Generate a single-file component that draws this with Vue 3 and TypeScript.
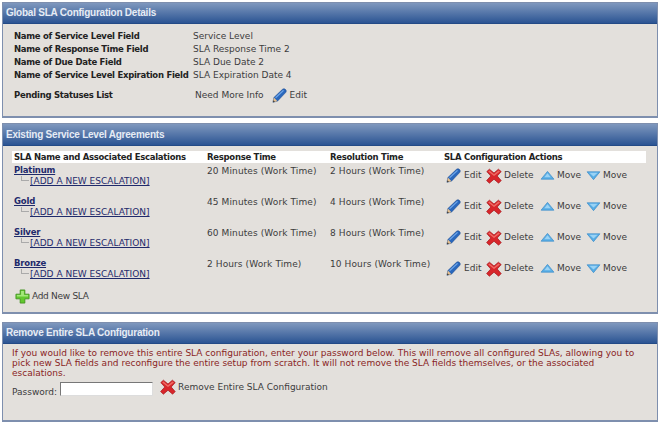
<script setup lang="ts">
const details: { label: string; value: string }[] = [
  { label: 'Name of Service Level Field', value: 'Service Level' },
  { label: 'Name of Response Time Field', value: 'SLA Response Time 2' },
  { label: 'Name of Due Date Field', value: 'SLA Due Date 2' },
  { label: 'Name of Service Level Expiration Field', value: 'SLA Expiration Date 4' },
]
const slas: { name: string; response: string; resolution: string }[] = [
  { name: 'Platinum', response: '20 Minutes (Work Time)', resolution: '2 Hours (Work Time)' },
  { name: 'Gold', response: '45 Minutes (Work Time)', resolution: '4 Hours (Work Time)' },
  { name: 'Silver', response: '60 Minutes (Work Time)', resolution: '8 Hours (Work Time)' },
  { name: 'Bronze', response: '2 Hours (Work Time)', resolution: '10 Hours (Work Time)' },
]
</script>

<template>
  <div class="page">
    <section class="panel first">
      <h2 class="head">Global SLA Configuration Details</h2>
      <div class="details">
        <div v-for="d in details" :key="d.label" class="detail">
          <b class="dlabel">{{ d.label }}</b><span>{{ d.value }}</span>
        </div>
        <div class="detail pending">
          <b class="dlabel">Pending Statuses List</b>
          <span class="pval">Need More Info</span>
          <span class="act editp">
            <svg class="ic" viewBox="0 0 16 16"><path d="M1 15.200 2 10.200 11.200 1.400c1.100-.9 2.400-.7 3.300.3s.9 2.200 0 3.200L5.800 14z" fill="#2a68bd" stroke="#1b4a8e" stroke-width=".6"/><path d="M3.400 9.800 11.800 2l1 .8-8.600 8z" fill="#6fa6e8"/><path d="M1 15.200 2 10.200l3.800 3.800z" fill="#e7c08e"/><path d="M1 15.200l.5-2.200 1.700 1.700z" fill="#333"/></svg>Edit
          </span>
        </div>
      </div>
    </section>

    <section class="panel second">
      <h2 class="head tall">Existing Service Level Agreements</h2>
      <div class="table">
        <div class="row hdr">
          <b>SLA Name and Associated Escalations</b>
          <b>Response Time</b>
          <b>Resolution Time</b>
          <b>SLA Configuration Actions</b>
        </div>
        <div v-for="s in slas" :key="s.name" class="row sla">
          <div class="namecell">
            <a class="name">{{ s.name }}</a>
            <div class="esc"><i class="elbow"></i><a class="add">[ADD A NEW ESCALATION]</a></div>
          </div>
          <div class="cell">{{ s.response }}</div>
          <div class="cell">{{ s.resolution }}</div>
          <div class="actions">
            <span class="act a1"><svg class="ic" viewBox="0 0 16 16"><path d="M1 15.200 2 10.200 11.200 1.400c1.100-.9 2.400-.7 3.300.3s.9 2.200 0 3.200L5.800 14z" fill="#2a68bd" stroke="#1b4a8e" stroke-width=".6"/><path d="M3.400 9.800 11.800 2l1 .8-8.600 8z" fill="#6fa6e8"/><path d="M1 15.200 2 10.200l3.800 3.800z" fill="#e7c08e"/><path d="M1 15.200l.5-2.200 1.700 1.700z" fill="#333"/></svg>Edit</span>
            <span class="act a2"><svg class="ic x" viewBox="0 0 16 16"><path d="M3.400 1.200 8 5 12.400 1.200 15.200 3.600 11.200 8l4 4.600-2.600 2.600L8 11.200l-4.600 4-2.800-2.600L4.800 8 .8 3.600z" fill="#d8262b" stroke="#a5171b" stroke-width=".7" stroke-linejoin="round"/><path d="M3.400 2.400 8 6.200 12.400 2.400 14 3.600 8 8 2.200 3.600z" fill="#ee6a64"/></svg>Delete</span>
            <span class="act a3"><svg class="ic tri" viewBox="0 0 16 12"><path d="M8 1.500 15 10H1z" fill="#58aee6" stroke="#3d8cc8" stroke-width=".8" stroke-linejoin="round"/><path d="M8 3.500 11.500 8h-7z" fill="#9bd3f5"/></svg>Move</span>
            <span class="act"><svg class="ic tri" viewBox="0 0 16 12"><path d="M8 10.500 15 2H1z" fill="#58aee6" stroke="#3d8cc8" stroke-width=".8" stroke-linejoin="round"/><path d="M3.500 3h9L8 7z" fill="#9bd3f5"/></svg>Move</span>
          </div>
        </div>
        <div class="addsla">
          <svg class="plus" viewBox="0 0 16 16"><path d="M5.500 1h5v4.500H15v5h-4.500V15h-5v-4.500H1v-5h4.500z" fill="#62c92f" stroke="#3f8f1d" stroke-width=".9" stroke-linejoin="round"/><path d="M6.500 2h3v4.500H14V8H2V6.500h4.500z" fill="#a3e87a"/></svg>
          Add New SLA
        </div>
      </div>
    </section>

    <section class="panel third">
      <h2 class="head">Remove Entire SLA Configuration</h2>
      <div class="remove">
        <p class="warn">If you would like to remove this entire SLA configuration, enter your password below. This will remove all configured SLAs, allowing you to pick new SLA fields and reconfigure the entire setup from scratch. It will not remove the SLA fields themselves, or the associated escalations.</p>
        <div class="pw">
          <label class="pwl" for="pw">Password:</label>
          <input id="pw" class="input" type="password" />
          <span class="act rm"><svg class="ic x" viewBox="0 0 16 16"><path d="M3.400 1.200 8 5 12.400 1.200 15.200 3.600 11.200 8l4 4.600-2.600 2.600L8 11.200l-4.600 4-2.800-2.600L4.800 8 .8 3.600z" fill="#d8262b" stroke="#a5171b" stroke-width=".7" stroke-linejoin="round"/><path d="M3.400 2.400 8 6.200 12.400 2.400 14 3.600 8 8 2.200 3.600z" fill="#ee6a64"/></svg>Remove Entire SLA Configuration</span>
        </div>
      </div>
    </section>
  </div>
</template>

<style scoped>
.page {
  width: 660px;
  height: 424px;
  box-sizing: border-box;
  padding: 2px 2px 0;
  background: #fff;
  font: 9px/13px "DejaVu Sans", Verdana, sans-serif;
  color: #3c3c3c;
  overflow: hidden;
  display: flex;
  flex-direction: column;
}
.panel {
  box-sizing: border-box;
  background: #e3e0dc;
  border: 1px solid #7e8fae;
  border-bottom-width: 2px;
  flex: none;
}
.first { height: 116px; }
.second { height: 191px; margin-top: 5px; }
.third { height: 100px; margin-top: 8px; }
.head {
  margin: 0;
  height: 20px;
  padding-left: 3px;
  font: bold 10px/20px "Liberation Sans", Arial, sans-serif;
  letter-spacing: -0.23px;
  color: #e6ecf5;
  background: linear-gradient(#7f98be, #2b5493);
  border-bottom: 1px solid #234a86;
}
.tall { height: 21px; line-height: 21px; }
.details { padding: 6px 11px 0; }
.detail { display: flex; height: 13px; }
.dlabel { width: 179px; flex: none; color: #222; font-size: 8.5px; font-weight: bold; letter-spacing: -0.28px; white-space: nowrap; }
.pending { margin-top: 4px; height: 18px; align-items: center; }
.pval { margin-left: 2px; }
.act { display: inline-flex; align-items: center; white-space: nowrap; }
.editp { margin-left: 8px; }
.ic { width: 15px; height: 15px; margin-right: 3px; flex: none; }
.x { width: 16px; height: 16px; margin-right: 2px; }
.tri { width: 15px; height: 11px; margin-right: 2px; }

.table { padding: 5px 10px 0 9px; }
.row {
  display: grid;
  grid-template-columns: 193px 123px 114px 1fr;
}
.hdr { background: #fff; height: 12px; line-height: 12px; color: #222; margin-right: 1px; }
.hdr > b { padding-left: 2px; font-size: 8.5px; letter-spacing: -0.28px; white-space: nowrap; }
.sla { height: 31px; padding-top: 2px; box-sizing: border-box; }
.cell { padding-left: 2px; letter-spacing: 0.1px; }
.name { color: #1f2a6b; font-size: 8.5px; font-weight: bold; text-decoration: underline; display: block; padding-left: 2px; line-height: 11px; letter-spacing: -0.2px; }
.esc { display: flex; height: 11px; line-height: 11px; padding-left: 9px; }
.elbow { width: 8px; height: 5px; border-left: 1px solid #aaa; border-bottom: 1px solid #aaa; box-sizing: border-box; flex: none; }
.add { color: #1f2a6b; text-decoration: underline; padding-left: 1px; }
.actions { display: flex; align-items: center; height: 17px; margin-top: 2px; padding-left: 4px; }
.a1 { width: 40px; }
.a2 { width: 54px; }
.a3 { width: 46px; }
.addsla { display: flex; align-items: center; height: 16px; margin-top: 1px; padding-left: 3px; letter-spacing: -0.3px; }
.plus { width: 15px; height: 15px; margin-right: 2px; }

.remove { padding: 4px 9px 0; }
.warn { margin: 0; line-height: 10px; color: #8a1f1f; width: 625px; }
.pw { display: flex; align-items: flex-start; height: 18px; margin-top: 4px; }
.pwl { margin-right: 3px; padding-top: 4px; }
.input {
  width: 93px;
  height: 14px;
  padding: 0;
  box-sizing: border-box;
  border: 1px solid #777;
  border-right-color: #ddd;
  border-bottom-color: #ddd;
  background: #fff;
}
.rm { margin-left: 7px; margin-top: -3px; }
</style>
